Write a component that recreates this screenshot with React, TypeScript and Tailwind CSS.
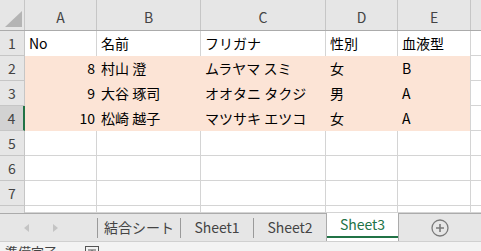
import React from 'react';

const cols = [
  { label: 'A', w: 'w-[72px]' },
  { label: 'B', w: 'w-[104px]' },
  { label: 'C', w: 'w-[125px]' },
  { label: 'D', w: 'w-[72px]' },
  { label: 'E', w: 'w-[73px]' },
];

const data = [
  ['8', '村山 澄', 'ムラヤマ スミ', '女', 'B'],
  ['9', '大谷 琢司', 'オオタニ タクジ', '男', 'A'],
  ['10', '松崎 越子', 'マツサキ エツコ', '女', 'A'],
];

const font = { fontFamily: '"Noto Sans CJK JP", "Noto Sans", sans-serif' };

const RowHead: React.FC<{ n?: number; active?: boolean }> = ({ n, active }) => (
  <div
    className={`w-[25px] h-[25px] shrink-0 flex items-center justify-center text-[14px] text-[#444] border-b border-[#c6c6c6] ${
      active ? 'bg-[#d2d2d2] border-r-2 border-r-[#217346]' : 'bg-[#e6e6e6] border-r border-r-[#c6c6c6]'
    }`}
  >
    {n}
  </div>
);

export default function App() {
  return (
    <div className="w-[481px] h-[251px] overflow-hidden bg-white flex flex-col text-black" style={font}>
      {/* column headers */}
      <div className="flex h-[31px] bg-[#e6e6e6] border-b border-[#ababab] shrink-0">
        <div className="w-[25px] shrink-0 border-r border-[#c6c6c6] relative">
          <svg className="absolute left-[5px] top-[11px]" width="17" height="16" viewBox="0 0 17 16">
            <polygon points="17,0 17,16 0,16" fill="#b4b4b4" />
          </svg>
        </div>
        {cols.map((c) => (
          <div
            key={c.label}
            className={`${c.w} shrink-0 border-r border-[#c6c6c6] flex items-center justify-center pt-[5px] text-[14px] text-[#444]`}
          >
            {c.label}
          </div>
        ))}
        <div className="flex-1" />
      </div>

      {/* row 1 */}
      <div className="flex h-[25px] shrink-0">
        <RowHead n={1} />
        {['No', '名前', 'フリガナ', '性別', '血液型'].map((t, i) => (
          <div
            key={t}
            className={`${cols[i].w} shrink-0 border-r border-[#d4d4d4] text-[14px] leading-[25px] pl-[4px]`}
          >
            {t}
          </div>
        ))}
        <div className="flex-1 border-b border-[#d4d4d4]" />
      </div>

      {/* data rows */}
      {data.map((r, ri) => (
        <div key={ri} className="flex h-[25px] shrink-0">
          <RowHead n={ri + 2} active={ri === 2} />
          <div className="flex bg-[#fce4d6]">
            {r.map((t, i) => (
              <div
                key={i}
                className={`${cols[i].w} shrink-0 text-[14px] leading-[25px] ${
                  i === 0 ? 'text-right pr-[2px]' : 'pl-[4px]'
                } ${i === 4 ? 'border-r border-[#d4d4d4]' : ''}`}
              >
                {t}
              </div>
            ))}
          </div>
          <div className="flex-1 border-b border-[#d4d4d4]" />
        </div>
      ))}

      {/* empty rows */}
      {[5, 6, 7, 8].map((n) => (
        <div key={n} className={`flex shrink-0 ${n === 8 ? 'h-[7px] overflow-hidden' : 'h-[25px]'}`}>
          <RowHead n={n === 8 ? undefined : n} />
          {cols.map((c) => (
            <div key={c.label} className={`${c.w} shrink-0 border-r border-b border-[#d4d4d4]`} />
          ))}
          <div className="flex-1 border-b border-[#d4d4d4]" />
        </div>
      ))}

      {/* sheet tabs */}
      <div className="flex h-[28px] shrink-0 bg-[#e6e6e6] text-[14px] text-[#444]">
        <div className="w-[97px] shrink-0 border-t border-[#ababab] flex items-center">
          <svg className="ml-[24px]" width="5" height="8" viewBox="0 0 5 8">
            <polygon points="5,0 5,8 0,4" fill="#c4c4c4" />
          </svg>
          <svg className="ml-[24px]" width="5" height="8" viewBox="0 0 5 8">
            <polygon points="0,0 0,8 5,4" fill="#c4c4c4" />
          </svg>
        </div>
        {['結合シート', 'Sheet1', 'Sheet2'].map((t) => (
          <div key={t} className="border-t border-[#ababab] flex items-center shrink-0">
            <div className="w-px h-[20px] bg-[#9a9a9a]" />
            <div className={`${t === '結合シート' ? 'w-[82px]' : 'w-[72px]'} text-center`}>{t}</div>
          </div>
        ))}
        <div className="w-[73px] shrink-0 bg-white border-x border-[#ababab] flex flex-col">
          <div className="flex-1 flex items-center justify-center text-[#217346]">Sheet3</div>
          <div className="h-[2px] bg-[#217346] mb-[3px]" />
        </div>
        <div className="flex-1 border-t border-[#ababab] flex items-center pl-[32px]">
          <svg width="18" height="18" viewBox="0 0 18 18">
            <circle cx="9" cy="9" r="8" fill="none" stroke="#7a7a7a" strokeWidth="1.3" />
            <path d="M9 5v8M5 9h8" stroke="#7a7a7a" strokeWidth="1.6" />
          </svg>
        </div>
      </div>

      {/* status bar */}
      <div className="flex-1 bg-[#f3f3f3] border-t border-[#d0d0d0] relative overflow-hidden">
        <div className="absolute left-[5px] top-[3px] flex items-center gap-[28px] text-[13px] text-[#444] leading-none">
          <span>準備完了</span>
          <svg width="14" height="12" viewBox="0 0 14 12">
            <rect x="0.5" y="0.5" width="13" height="11" fill="none" stroke="#555" />
            <path d="M3 4h8M3 7h8M7 4v6" stroke="#555" />
          </svg>
        </div>
      </div>
    </div>
  );
}
